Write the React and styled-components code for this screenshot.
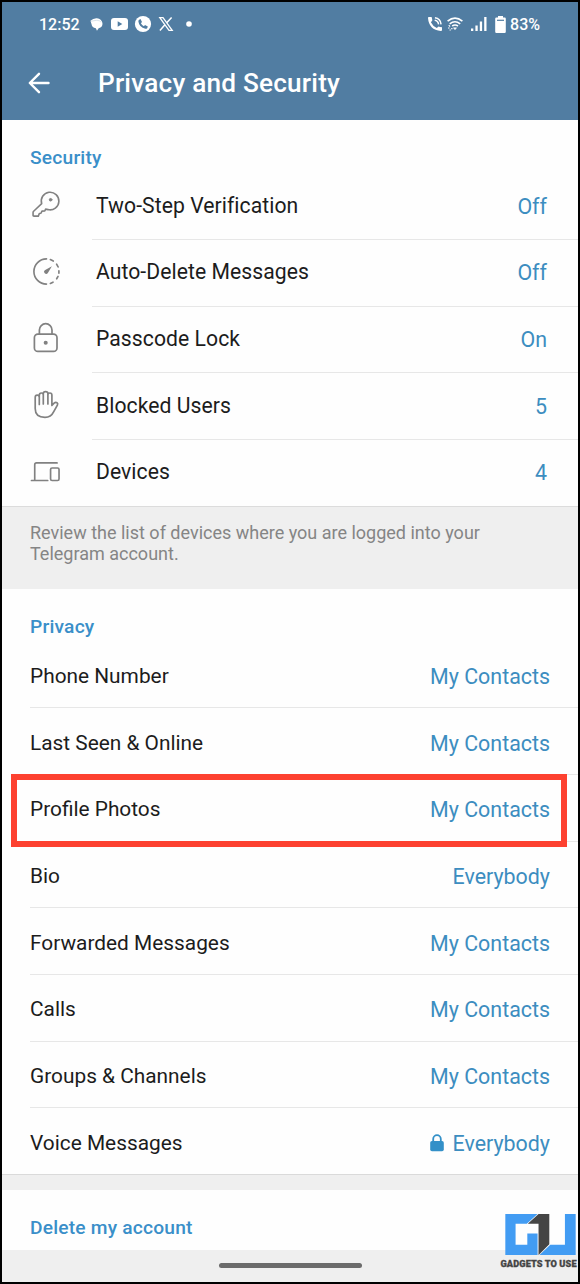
import React from 'react';
import styled, { createGlobalStyle } from 'styled-components';

const GlobalStyle = createGlobalStyle`
  *, *::before, *::after { box-sizing: border-box; }
  body { margin: 0; background: #fff; font-family: Roboto, sans-serif; }
`;

const Screen = styled.div`
  position: relative;
  display: flex;
  flex-direction: column;
  width: 580px;
  height: 1284px;
  border: 2px solid #000;
  background: #fefefe;
  overflow: hidden;
  white-space: nowrap;
`;

const Header = styled.header`
  display: flex;
  flex-direction: column;
  height: 118px;
  flex: none;
  background: #517da2;
  color: #fff;
`;

const StatusBar = styled.div`
  display: flex;
  align-items: center;
  justify-content: space-between;
  height: 44px;
  padding: 0 38px 0 37px;
  font-size: 16px;
  font-weight: 500;
`;

const StatusGroup = styled.div`
  display: flex;
  align-items: center;
`;

const StatusText = styled.span`
  margin-left: ${(p) => p.$before || 0}px;
`;

const Glyph = styled.svg`
  display: block;
  flex: none;
  overflow: visible;
  margin-left: ${(p) => p.$before || 0}px;
`;

const TitleBar = styled.div`
  display: flex;
  align-items: center;
  height: 74px;
  padding-left: 26px;
`;

const Title = styled.h1`
  margin: 0 0 0 48px;
  font-size: 26.2px;
  font-weight: 500;
  letter-spacing: 0.2px;
  line-height: 74px;
`;

const SectionTitle = styled.h2`
  margin: 0;
  padding-left: 28px;
  height: ${(p) => p.$height}px;
  line-height: ${(p) => p.$line}px;
  font-size: 19.2px;
  font-weight: 500;
  letter-spacing: 0.2px;
  color: #3a8fc9;
  flex: none;
`;

const Row = styled.div`
  display: flex;
  align-items: stretch;
  height: ${(p) => p.$height}px;
  padding-left: 28px;
  flex: none;
`;

const IconSlot = styled.div`
  display: flex;
  align-items: center;
  width: 62px;
  padding-bottom: 3px;
  flex: none;
`;

const RowBody = styled.div`
  display: flex;
  flex: 1;
  align-items: center;
  justify-content: space-between;
  padding: ${(p) => (p.$icon ? '0 31px 2px 4px' : '3px 28px 0 0')};
  border-bottom: ${(p) => (p.$last ? 0 : 1)}px solid #e7e7e7;
`;

const Label = styled.span`
  color: #1c1c1c;
  font-size: ${(p) => (p.$icon ? 21.15 : 20.85)}px;
  letter-spacing: ${(p) => (p.$icon ? 0.06 : 0)}px;
`;

const Value = styled.span`
  display: flex;
  align-items: center;
  gap: 9px;
  padding-top: ${(p) => (p.$icon ? 2 : 1)}px;
  color: #3c8dc0;
  font-size: 21.4px;
`;

const Note = styled.div`
  height: 83px;
  flex: none;
  padding: 15px 28px;
  background: #efefef;
  border-top: 1px solid #dcdcdc;
  color: #858585;
  font-size: 18px;
  line-height: 21.5px;
`;

const Divider = styled.div`
  height: 16px;
  flex: none;
  background: #efefef;
  border-top: 1px solid #dadada;
`;

const NavigationBar = styled.div`
  display: flex;
  flex: 1;
  justify-content: center;
  padding-top: 13px;
  background: #efefef;
`;

const Handle = styled.div`
  width: 143px;
  height: 5px;
  border-radius: 3px;
  background: #6b6b6b;
`;

const Highlight = styled.div`
  position: absolute;
  left: 9px;
  top: 772px;
  width: 556px;
  height: 73px;
  border: 6px solid #fd4130;
`;

const Watermark = styled.div`
  position: absolute;
  left: 498.5px;
  top: 1211px;
  width: 80px;
`;

const WatermarkText = styled.div`
  margin-top: 3px;
  color: #444;
  font: 900 9.2px/10px Roboto, sans-serif;
  letter-spacing: 0.1px;
  -webkit-text-stroke: 0.3px #444;
`;

const lineProps = {
  fill: 'none',
  stroke: '#818181',
  strokeWidth: 1.7,
  strokeLinecap: 'round',
  strokeLinejoin: 'round',
};

function KeyIcon() {
  return (
    <Glyph $before={0.5} width="30" height="30" viewBox="0 0 32 32" {...lineProps}>
      <path d="M11.4 14.6A9.4 9.4 0 1 1 18.2 20.9L15.6 20.4L14.7 22.4L11.7 22.5L10.6 24.8L8.9 25L7.8 27.9H3.2Q2.2 27.9 2.2 26.9V24.1Q2.2 23.3 2.8 22.7L11.4 14.6Z" />
      <circle cx="20.9" cy="10.4" r="1.4" fill="#818181" stroke="#818181" strokeWidth="1" />
    </Glyph>
  );
}

function TimerIcon() {
  return (
    <Glyph $before={0.5} width="31" height="31" viewBox="0 0 32 32" {...lineProps}>
      <path d="M16 3A13 13 0 0 0 16 29" />
      <path d="M20 3.7L23 5.2M26.4 8.4L28 11.3M28.8 15.3V17.8M27.9 21L26.5 23.5M22.7 27L20 28.3" />
      <path d="M21.6 10.6L14.2 14.6A2.2 2.2 0 1 0 17.4 17.6Z" fill="#818181" stroke="none" />
    </Glyph>
  );
}

function LockIcon() {
  return (
    <Glyph width="32" height="32" viewBox="0 0 32 32" {...lineProps}>
      <rect x="4.4" y="12.2" width="22.6" height="17.2" rx="3.5" />
      <path d="M9.4 12V8A6.3 6.3 0 0 1 22 8V12" />
      <circle cx="15.7" cy="20.7" r="1.2" fill="#818181" />
    </Glyph>
  );
}

function HandIcon() {
  return (
    <Glyph width="32" height="32" viewBox="0 0 32 32" {...lineProps}>
      <path d="M9.3 15.5V6.4Q9.3 4 11.3 4Q13.3 4 13.3 6V15V4.6Q13.3 2.6 15.6 2.6Q17.9 2.6 17.9 4.6V15V5.8Q17.9 4 19.9 4Q21.9 4 21.9 6.2V16.4L24.1 14.2Q25.6 13 27 13.8Q28.2 14.6 27.4 16.1L23.6 22.9Q21 28.4 15 28.4Q5.2 28.4 5.2 19.6V8.4Q5.2 6.2 7.2 6.2Q9.3 6.2 9.3 8.4" />
    </Glyph>
  );
}

function DevicesIcon() {
  return (
    <Glyph width="31.5" height="31.5" viewBox="0 0 32 32" {...lineProps}>
      <path d="M27.5 7H6.6Q4.8 7 4.8 8.8V24.7M1.5 24.9H18" />
      <rect x="20.9" y="12.2" width="8.6" height="12.7" rx="1.5" />
    </Glyph>
  );
}

function SmallLock() {
  return (
    <Glyph width="14" height="18" viewBox="0 0 14 18">
      <rect x="0.2" y="7" width="13.6" height="10.2" rx="1.8" fill="#3390c8" />
      <path d="M3.2 8V5A3.8 3.8 0 0 1 10.8 5V8" fill="none" stroke="#3390c8" strokeWidth="1.8" />
    </Glyph>
  );
}

function StatusLeft() {
  return (
    <StatusGroup>
      <StatusText>12:52</StatusText>
      <Glyph $before={10} width="13" height="13" viewBox="0 0 13 14" fill="#fff">
        <path d="M0 3Q3 0 7 .3Q12 1 12.9 5.4Q13.4 10 8.8 11L7 13.7L5.8 11Q1.7 10.6 1.1 6.4Z" />
        <path d="M.5 3.5L7 2.4Q10 2.6 11.5 4.5" fill="none" stroke="#a9bfd2" strokeWidth=".5" />
      </Glyph>
      <Glyph $before={8} width="17" height="12" viewBox="0 0 17 12">
        <rect width="17" height="12" rx="3" fill="#fff" />
        <path d="M6.7 3.3L11.3 6L6.7 8.7Z" fill="#517da2" />
      </Glyph>
      <Glyph $before={7} width="16" height="16" viewBox="0 0 16 16">
        <circle cx="8" cy="8" r="8.1" fill="#fff" />
        <path d="M3.8 3.9L5.5 3.1L7 6L5.9 7.2Q6.9 9.3 8.9 10.2L10 9.1L12.8 10.6L12.2 12.2Q11.5 12.8 10.4 12.7Q4.2 11.6 3.4 5.6Q3.3 4.5 3.8 3.9Z" fill="#517da2" />
      </Glyph>
      <Glyph $before={8} width="14" height="14" viewBox="0 0 14 14" fill="none" stroke="#fff">
        <path d="M.8 .7H4L13.2 13.3H10Z" strokeWidth="1.3" />
        <path d="M12.6 .4L7.7 5.8M5.9 7.8L.9 13.6" strokeWidth="1.5" />
      </Glyph>
      <Glyph $before={13} width="6" height="6" viewBox="0 0 6 6" fill="#fff">
        <circle cx="3" cy="3" r="2.8" />
      </Glyph>
    </StatusGroup>
  );
}

function StatusRight() {
  return (
    <StatusGroup>
      <Glyph width="14" height="14" viewBox="0 0 14 14" fill="#fff">
        <path d="M.8 0H3.6Q4.4 2.6 4.3 3.5L2.9 5.2Q4.7 9 8.8 11.1L10.5 9.5Q11.8 10 14 10.3V13.2Q13.8 14 12.8 13.9Q1 13 0 1Q0 .1.8 0Z" />
        <path d="M6.7 3.3Q10 3.8 10.6 7.4M6.9 .8Q12.4 1.5 13.1 7.3" fill="none" stroke="#fff" strokeWidth="1.5" />
      </Glyph>
      <Glyph $before={5} width="16" height="14" viewBox="0 0 16 14" fill="none" stroke="#fff" strokeWidth="1.6">
        <path d="M.6 4.2Q8 -2 15.4 4.2M2.7 6.8Q8 2.7 13.2 6.8M5.2 9Q8 7 11 9" />
        <path d="M6.4 10.8H9.6L8 12.8Z" fill="#fff" strokeWidth=".5" />
        <path d="M1.8 8L3 9.6M1 11H2.5M4.2 11.6H5.5M2.5 13H3.8" strokeWidth="1.2" />
      </Glyph>
      <Glyph $before={8} width="16" height="14" viewBox="0 0 16 14" fill="#fff">
        <rect y="11.5" width="2.3" height="2.5" />
        <rect x="4.4" y="8.5" width="2.3" height="5.5" />
        <rect x="8.8" y="4.5" width="2.3" height="9.5" />
        <rect x="13.2" y="0" width="2.3" height="14" />
      </Glyph>
      <Glyph $before={8} width="11" height="17" viewBox="0 0 11 17">
        <path d="M3 0H8V1.6H9.7Q10.8 1.6 10.8 2.8V15.7Q10.8 17 9.6 17H1.4Q.2 17 .2 15.7V2.8Q.2 1.6 1.4 1.6H3Z" fill="#fff" />
        <path d="M2 4.3H9" stroke="#517da2" strokeWidth="1.2" />
      </Glyph>
      <StatusText $before={4}>83%</StatusText>
    </StatusGroup>
  );
}

const security = [
  { label: 'Two-Step Verification', value: 'Off', Icon: KeyIcon },
  { label: 'Auto-Delete Messages', value: 'Off', Icon: TimerIcon },
  { label: 'Passcode Lock', value: 'On', Icon: LockIcon },
  { label: 'Blocked Users', value: '5', Icon: HandIcon },
  { label: 'Devices', value: '4', Icon: DevicesIcon },
];

const privacy = [
  { label: 'Phone Number', value: 'My Contacts' },
  { label: 'Last Seen & Online', value: 'My Contacts' },
  { label: 'Profile Photos', value: 'My Contacts' },
  { label: 'Bio', value: 'Everybody' },
  { label: 'Forwarded Messages', value: 'My Contacts' },
  { label: 'Calls', value: 'My Contacts' },
  { label: 'Groups & Channels', value: 'My Contacts' },
  { label: 'Voice Messages', value: 'Everybody', locked: true },
];

function SettingRow({ label, value, Icon, locked, last }) {
  const hasIcon = !!Icon;
  return (
    <Row $height={last ? 66 : 66.67}>
      {Icon && (
        <IconSlot>
          <Icon />
        </IconSlot>
      )}
      <RowBody $icon={hasIcon} $last={last}>
        <Label $icon={hasIcon}>{label}</Label>
        <Value $icon={hasIcon}>
          {locked && <SmallLock />}
          {value}
        </Value>
      </RowBody>
    </Row>
  );
}

export default function App() {
  return (
    <>
      <GlobalStyle />
      <Screen>
        <Header>
          <StatusBar>
            <StatusLeft />
            <StatusRight />
          </StatusBar>
          <TitleBar>
            <Glyph width="22" height="22" viewBox="0 0 22 22" fill="none" stroke="#fff" strokeWidth="2.4" strokeLinecap="round" strokeLinejoin="round">
              <path d="M20.5 11H2M11 1.8L1.8 11L11 20.2" />
            </Glyph>
            <Title>Privacy and Security</Title>
          </TitleBar>
        </Header>
        <SectionTitle $height={53.3} $line={76}>Security</SectionTitle>
        {security.map((row, i) => (
          <SettingRow key={row.label} {...row} last={i === security.length - 1} />
        ))}
        <Note>
          Review the list of devices where you are logged into your
          <br />
          Telegram account.
        </Note>
        <SectionTitle $height={52.7} $line={75}>Privacy</SectionTitle>
        {privacy.map((row, i) => (
          <SettingRow key={row.label} {...row} last={i === privacy.length - 1} />
        ))}
        <Divider />
        <SectionTitle $height={59.5} $line={75}>Delete my account</SectionTitle>
        <NavigationBar>
          <Handle />
        </NavigationBar>
        <Highlight />
        <Watermark>
          <Glyph $before={4} width="71" height="43" viewBox="0 0 72 44">
            <path d="M0 1H33L22 11H10.5V32.5H22.5V21H33V43H0Z" fill="#429cf3" />
            <path d="M61 1H72V43H35L46 32.5H61Z" fill="#429cf3" />
            <path d="M34 1H45V32L34 43V11H23Z" fill="#454545" />
          </Glyph>
          <WatermarkText>GADGETS TO USE</WatermarkText>
        </Watermark>
      </Screen>
    </>
  );
}
